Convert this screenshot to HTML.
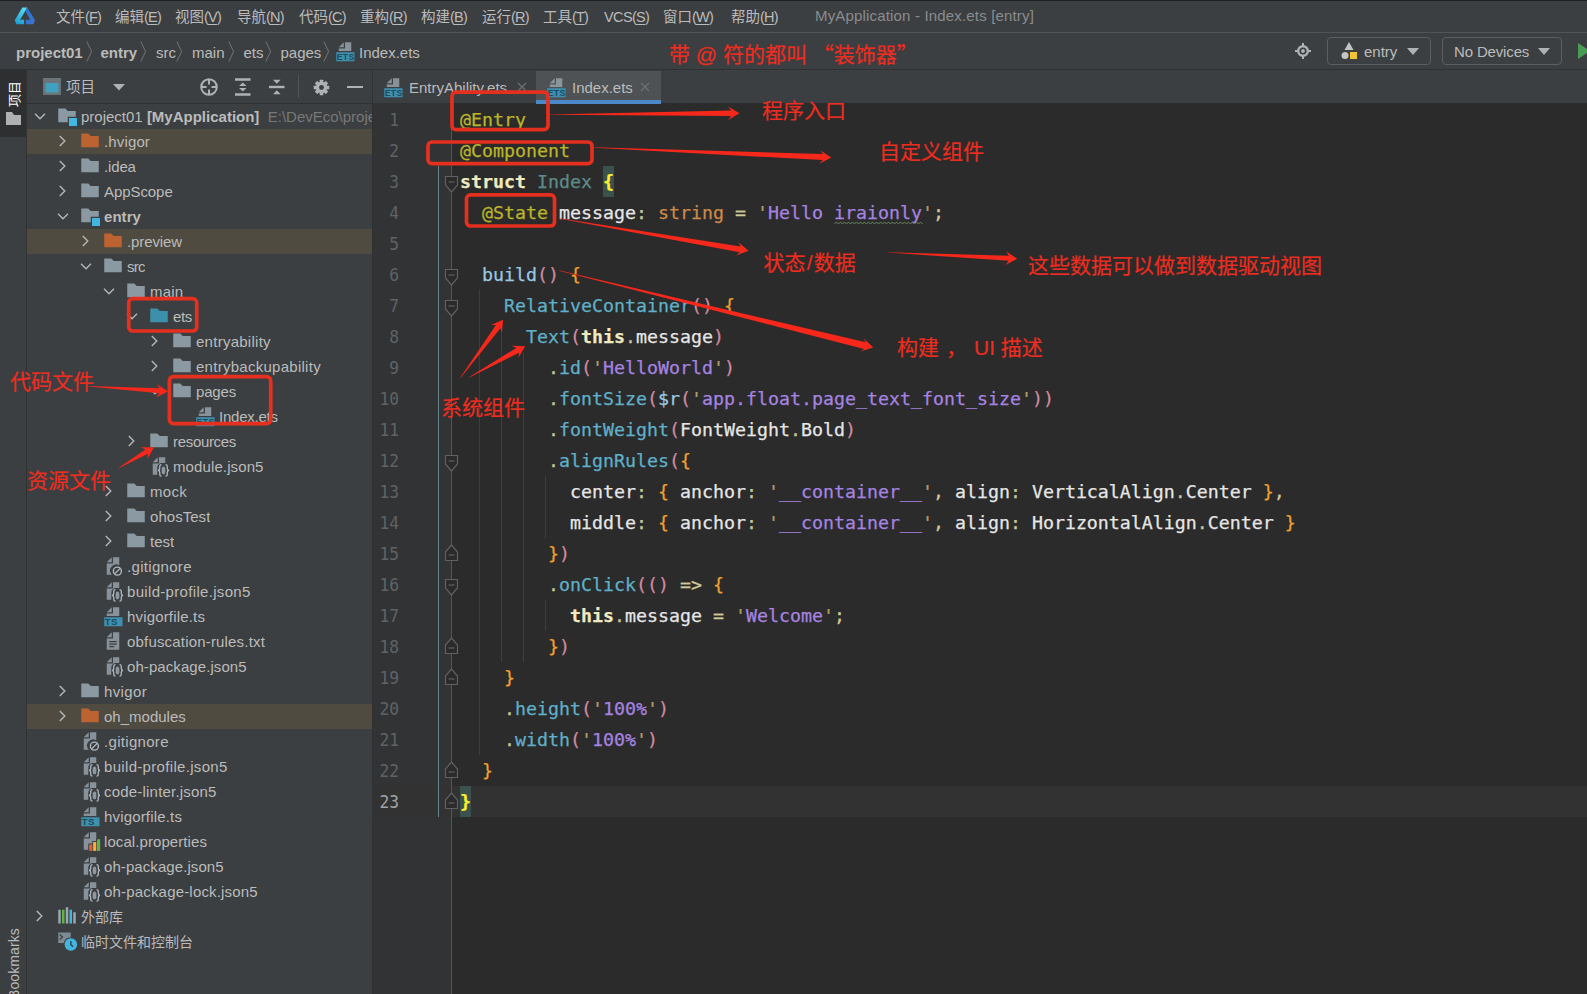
<!DOCTYPE html><html lang="zh"><head><meta charset="utf-8"><title>MyApplication - Index.ets [entry]</title><style>
*{box-sizing:border-box;margin:0;padding:0}
html,body{width:1587px;height:994px;overflow:hidden;background:#3c3f41}
body{position:relative;font-family:"Liberation Sans","Noto Sans CJK SC",sans-serif;color:#bbbbbb;font-size:15px}
.abs{position:absolute}
.t{position:absolute;white-space:nowrap;line-height:1}
#menubar{left:0;top:0;width:1587px;height:32px;background:#3c3f41}
#navbar{left:0;top:32px;width:1587px;height:38px;background:#3c3f41;border-top:1px solid #515355;border-bottom:1px solid #2f3133}
#strip{left:0;top:70px;width:27px;height:924px;background:#3c3f41;border-right:1px solid #323232}
#stripsel{left:0;top:70px;width:26px;height:67px;background:#2d2f30}
#proj{left:27px;top:70px;width:346px;height:924px;background:#3c3f41;border-right:1px solid #2f3133}
#projhead{left:27px;top:70px;width:345px;height:34px;background:#3c3f41;border-bottom:1px solid #2f3133}
#tabs{left:373px;top:70px;width:1214px;height:33px;background:#3c3f41}
#editor{left:373px;top:103px;width:1214px;height:891px;background:#2b2b2b}
#gutter{left:373px;top:103px;width:78px;height:891px;background:#313335}
.menu{font-size:14.5px;color:#bbbbbb;top:9.5px}
.menu u{text-decoration:underline;text-underline-offset:2px}
.bc{font-size:15px;color:#bbbbbb;top:45px}
.b{font-weight:bold}
.row{position:absolute;left:27px;width:345px;height:25px}
.hl{background:#4f4b41}
.tl{position:absolute;white-space:nowrap;font-size:15px;overflow:hidden;color:#bbbbbb;line-height:25px;height:25px}
.code{position:absolute;white-space:pre;-webkit-text-stroke:.25px currentColor;font-family:"DejaVu Sans Mono","Liberation Mono",monospace;font-size:18.27px;line-height:31px;height:31px;left:460px;color:#e0e0e0;letter-spacing:0}
.ln{position:absolute;font-family:"DejaVu Sans Mono","Liberation Mono",monospace;font-size:18.27px;line-height:31px;height:31px;color:#606366;text-align:right;width:30px;left:369px;transform:scaleX(.89);transform-origin:100% 50%}
.red{color:#ee2c1f;-webkit-text-stroke:.2px #ee2c1f;font-family:"Liberation Sans","Noto Sans CJK SC",sans-serif}
.an{color:#bbb529}.kw{color:#f0e9c0;font-weight:bold}.ty{color:#5d8b8b}.st{color:#a683e0}.q{color:#b59a6a}
.or{color:#cc8a4a}.eq{color:#d2ca96}.fn{color:#98c8e2}.pk{color:#d08aa0}.br{color:#f0a030}.cm{color:#5fb0c8}.mt{color:#5fb0c8}
.wh{color:#e6e6e6}.dt{color:#c8c8a0}
</style></head><body>
<div class="abs" id="menubar"></div><div class="abs" id="navbar"></div>
<div class="abs" id="strip"></div><div class="abs" id="stripsel"></div>
<div class="abs" id="proj"></div><div class="abs" id="projhead"></div>
<div class="abs" id="tabs"></div><div class="abs" id="editor"></div><div class="abs" id="gutter"></div>
<svg class="abs" style="left:0;top:0" width="50" height="32" viewBox="0 0 50 32"><defs><linearGradient id="lg1" x1="0.600" y1="0" x2="0.300" y2="1"><stop offset="0" stop-color="#55dcf0"/><stop offset="1" stop-color="#1e9ed2"/></linearGradient><linearGradient id="lg2" x1="0.200" y1="0" x2="0.800" y2="1"><stop offset="0" stop-color="#2a76cc"/><stop offset="1" stop-color="#3f72d4"/></linearGradient></defs><path d="M22.300 7.600 H27.200 L20.200 19.700 H24.100 V24.300 H17.200 Q16.600 24.300 16.300 23.700 L15.100 21.200 Q14.700 20.400 15.200 19.600Z" fill="url(#lg1)"/><path d="M27.200 7.600 L34.600 19.600 Q35.100 20.400 34.700 21.200 L33.500 23.700 Q33.200 24.300 32.600 24.300 H25.900 V19.700 H30.300 L25.300 11.300Z" fill="url(#lg2)"/></svg>
<div class="abs" style="left:0;top:0;width:1587px;height:1px;background:#1e1f20"></div>
<div class="t menu" style="left:56px">文件<span style="letter-spacing:-.8px">(<u>F</u>)</span></div>
<div class="t menu" style="left:115px">编辑<span style="letter-spacing:-.8px">(<u>E</u>)</span></div>
<div class="t menu" style="left:175px">视图<span style="letter-spacing:-.8px">(<u>V</u>)</span></div>
<div class="t menu" style="left:237px">导航<span style="letter-spacing:-.8px">(<u>N</u>)</span></div>
<div class="t menu" style="left:299px">代码<span style="letter-spacing:-.8px">(<u>C</u>)</span></div>
<div class="t menu" style="left:360px">重构<span style="letter-spacing:-.8px">(<u>R</u>)</span></div>
<div class="t menu" style="left:421px">构建<span style="letter-spacing:-.8px">(<u>B</u>)</span></div>
<div class="t menu" style="left:482px">运行<span style="letter-spacing:-.8px">(<u>R</u>)</span></div>
<div class="t menu" style="left:543px">工具<span style="letter-spacing:-.8px">(<u>T</u>)</span></div>
<div class="t menu" style="left:604px"><span style="letter-spacing:-.6px">VCS</span><span style="letter-spacing:-.8px">(<u>S</u>)</span></div>
<div class="t menu" style="left:663px">窗口<span style="letter-spacing:-.8px">(<u>W</u>)</span></div>
<div class="t menu" style="left:731px">帮助<span style="letter-spacing:-.8px">(<u>H</u>)</span></div>
<div class="t" style="left:815px;top:7.5px;font-size:15px;letter-spacing:.17px;color:#8a8c8e">MyApplication - Index.ets [entry]</div>
<div class="t bc b" style="left:16px">project01</div>
<div class="t bc b" style="left:100.5px">entry</div>
<div class="t bc" style="left:156px">src</div>
<div class="t bc" style="left:192px">main</div>
<div class="t bc" style="left:243.5px">ets</div>
<div class="t bc" style="left:280.5px">pages</div>
<svg class="abs" style="left:85.5px;top:41px" width="7" height="21" viewBox="0 0 7 21"><path d="M.8 .5 L5.6 10.5 L.8 20.5" fill="none" stroke="#686b6d" stroke-width="1.1"/></svg>
<svg class="abs" style="left:140px;top:41px" width="7" height="21" viewBox="0 0 7 21"><path d="M.8 .5 L5.6 10.5 L.8 20.5" fill="none" stroke="#686b6d" stroke-width="1.1"/></svg>
<svg class="abs" style="left:175.5px;top:41px" width="7" height="21" viewBox="0 0 7 21"><path d="M.8 .5 L5.6 10.5 L.8 20.5" fill="none" stroke="#686b6d" stroke-width="1.1"/></svg>
<svg class="abs" style="left:227.5px;top:41px" width="7" height="21" viewBox="0 0 7 21"><path d="M.8 .5 L5.6 10.5 L.8 20.5" fill="none" stroke="#686b6d" stroke-width="1.1"/></svg>
<svg class="abs" style="left:264.5px;top:41px" width="7" height="21" viewBox="0 0 7 21"><path d="M.8 .5 L5.6 10.5 L.8 20.5" fill="none" stroke="#686b6d" stroke-width="1.1"/></svg>
<svg class="abs" style="left:323px;top:41px" width="7" height="21" viewBox="0 0 7 21"><path d="M.8 .5 L5.6 10.5 L.8 20.5" fill="none" stroke="#686b6d" stroke-width="1.1"/></svg>
<div class="t bc" style="left:359px">Index.ets</div>
<svg class="abs" style="left:335px;top:41px;overflow:visible" width="20" height="20" viewBox="0 0 16 16"><polygon fill="#9aa7b0" fill-opacity=".8" points="7 1 3 5 7 5"/><polygon fill="#9aa7b0" fill-opacity=".8" points="8 1 8 6 3 6 3 8 13 8 13 1"/><rect x="1" y="9" width="14.6" height="7.2" fill="#3f8fae"/><text x="8.5" y="15.3" font-size="6.9" font-family="Liberation Sans,sans-serif" font-weight="bold" text-anchor="middle" fill="#1b4c61" letter-spacing=".3">ETS</text></svg>
<div class="t red" style="left:669px;top:42.5px;font-size:21px">带 @ 符的都叫 <span style="font-family:'Noto Sans CJK SC',sans-serif">“装饰器”</span></div>
<svg class="abs" style="left:1295px;top:43px" width="16" height="16" viewBox="0 0 16 16"><circle cx="8" cy="8" r="4.800" fill="none" stroke="#afb1b3" stroke-width="2.400"/><circle cx="8" cy="8" r="1.900" fill="#afb1b3"/><path d="M8 0v3M8 13v3M0 8h3M13 8h3" stroke="#afb1b3" stroke-width="2"/></svg>
<div class="abs" style="left:1327px;top:37px;width:104px;height:28px;border:1px solid #5c5f61;border-radius:4px"></div>
<svg class="abs" style="left:1340px;top:42px" width="18" height="18" viewBox="0 0 18 18"><path d="M9 0 L13.5 8 L4.5 8Z" fill="#c4c4c4"/><circle cx="5" cy="13.5" r="3.5" fill="#c4c4c4"/><rect x="10" y="10" width="7" height="7" fill="#f4c430"/></svg>
<div class="t" style="left:1364px;top:44px;font-size:15px;color:#bbbbbb">entry</div>
<svg class="abs" style="left:1407px;top:48px" width="12" height="7" viewBox="0 0 12 7"><path d="M0 0 L12 0 L6 7Z" fill="#afb1b3"/></svg>
<div class="abs" style="left:1442px;top:37px;width:120px;height:28px;border:1px solid #5c5f61;border-radius:4px"></div>
<div class="t" style="left:1454px;top:44px;font-size:15px;letter-spacing:-.15px;color:#bbbbbb">No Devices</div>
<svg class="abs" style="left:1538px;top:48px" width="12" height="7" viewBox="0 0 12 7"><path d="M0 0 L12 0 L6 7Z" fill="#afb1b3"/></svg>
<svg class="abs" style="left:1578px;top:43px" width="9" height="16" viewBox="0 0 9 16"><path d="M0 0 L12 8 L0 16Z" fill="#499c54"/></svg>
<div class="t" style="left:7.5px;top:106.500px;font-size:13px;color:#ffffff;transform-origin:0 0;transform:rotate(-90deg)">项目</div>
<svg class="abs" style="left:6px;top:112px" width="15" height="13" viewBox="0 0 15 13"><path d="M0 0 H6 L8 3 H15 V13 H0Z" fill="#afb1b3"/></svg>
<div class="t" style="left:6.5px;top:999px;font-size:14px;letter-spacing:.1px;color:#bbbbbb;transform-origin:0 0;transform:rotate(-90deg)">Bookmarks</div>
<svg class="abs" style="left:43px;top:78px" width="18" height="17" viewBox="0 0 18 17"><rect x="0" y="0" width="18" height="17" fill="#7f8b91" opacity=".7"/><rect x="2.5" y="5" width="13" height="9.5" fill="#40a0c0"/></svg>
<div class="t" style="left:66px;top:80px;font-size:14.5px;color:#bbbbbb">项目</div>
<svg class="abs" style="left:113px;top:84px" width="12" height="7" viewBox="0 0 12 7"><path d="M0 0 L12 0 L6 6.5Z" fill="#afb1b3"/></svg>
<svg class="abs" style="left:200px;top:78px" width="18" height="18" viewBox="0 0 18 18"><circle cx="9" cy="9" r="7.8" fill="none" stroke="#afb1b3" stroke-width="2"/><path d="M9 1v5.5M9 11.5v5.5M1 9h5.5M11.500 9h5.5" stroke="#afb1b3" stroke-width="2"/></svg>
<svg class="abs" style="left:235px;top:78px" width="16" height="18" viewBox="0 0 16 18"><path d="M0 1.5h15.500M0 16.500h15.500" stroke="#afb1b3" stroke-width="2.6"/><path d="M7.800 4.500 L11.500 8 H4Z M7.800 13.500 L11.500 10 H4Z" fill="#afb1b3"/></svg>
<svg class="abs" style="left:269px;top:78px" width="16" height="18" viewBox="0 0 16 18"><path d="M0 9h15.500" stroke="#afb1b3" stroke-width="2.4"/><path d="M7.800 5.800 L11.600 1.800 H4Z M7.800 12.200 L11.600 16.200 H4Z" fill="#afb1b3"/></svg>
<div class="abs" style="left:298px;top:75px;width:1px;height:23px;background:#515355"></div>
<svg class="abs" style="left:312.5px;top:78.5px" width="17" height="17" viewBox="0 0 18 18"><g fill="#afb1b3"><circle cx="9" cy="9" r="6"/><rect x="7.1" y="0.800" width="3.800" height="5" rx=".6" transform="rotate(0 9 9)"/><rect x="7.1" y="0.800" width="3.800" height="5" rx=".6" transform="rotate(45 9 9)"/><rect x="7.1" y="0.800" width="3.800" height="5" rx=".6" transform="rotate(90 9 9)"/><rect x="7.1" y="0.800" width="3.800" height="5" rx=".6" transform="rotate(135 9 9)"/><rect x="7.1" y="0.800" width="3.800" height="5" rx=".6" transform="rotate(180 9 9)"/><rect x="7.1" y="0.800" width="3.800" height="5" rx=".6" transform="rotate(225 9 9)"/><rect x="7.1" y="0.800" width="3.800" height="5" rx=".6" transform="rotate(270 9 9)"/><rect x="7.1" y="0.800" width="3.800" height="5" rx=".6" transform="rotate(315 9 9)"/></g><circle cx="9" cy="9" r="2.600" fill="#3c3f41"/></svg>
<div class="abs" style="left:347px;top:85.500px;width:15.500px;height:2.600px;background:#afb1b3"></div>
<svg class="abs" style="left:33px;top:112px" width="14" height="9" viewBox="0 0 14 9"><path d="M2 1.800 L7 6.800 L12 1.800" fill="none" stroke="#b4b6b8" stroke-width="1.400"/></svg>
<svg class="abs" style="left:57px;top:106px;overflow:visible" width="20" height="20" viewBox="0 0 16 16"><path d="M1 2 H6.6 L8.6 4 H15 V13 H1Z" fill="#8b99a2"/><rect x="8.6" y="8.6" width="8" height="8" fill="#3c3f41"/><rect x="9.6" y="9.6" width="6.4" height="6.4" fill="#40b6e0"/></svg>
<div class="tl" style="left:81px;top:104px;max-width:291px;letter-spacing:0px">project01 <b>[MyApplication]</b><span style="color:#787878">&nbsp; E:\DevEco\proje</span></div>
<div class="row hl" style="top:129px"></div>
<svg class="abs" style="left:57.5px;top:134px" width="9" height="14" viewBox="0 0 9 14"><path d="M1.800 2 L6.800 7 L1.800 12" fill="none" stroke="#b4b6b8" stroke-width="1.400"/></svg>
<svg class="abs" style="left:80px;top:131px;overflow:visible" width="20" height="20" viewBox="0 0 16 16"><path d="M1 2 H6.6 L8.6 4 H15 V13 H1Z" fill="#bd6331"/></svg>
<div class="tl" style="left:104px;top:129px;max-width:268px;letter-spacing:0.14px">.hvigor</div>
<svg class="abs" style="left:57.5px;top:159px" width="9" height="14" viewBox="0 0 9 14"><path d="M1.800 2 L6.800 7 L1.800 12" fill="none" stroke="#b4b6b8" stroke-width="1.400"/></svg>
<svg class="abs" style="left:80px;top:156px;overflow:visible" width="20" height="20" viewBox="0 0 16 16"><path d="M1 2 H6.6 L8.6 4 H15 V13 H1Z" fill="#8b99a2"/></svg>
<div class="tl" style="left:104px;top:154px;max-width:268px;letter-spacing:-0.15px">.idea</div>
<svg class="abs" style="left:57.5px;top:184px" width="9" height="14" viewBox="0 0 9 14"><path d="M1.800 2 L6.800 7 L1.800 12" fill="none" stroke="#b4b6b8" stroke-width="1.400"/></svg>
<svg class="abs" style="left:80px;top:181px;overflow:visible" width="20" height="20" viewBox="0 0 16 16"><path d="M1 2 H6.6 L8.6 4 H15 V13 H1Z" fill="#8b99a2"/></svg>
<div class="tl" style="left:104px;top:179px;max-width:268px;letter-spacing:-0.07px">AppScope</div>
<svg class="abs" style="left:56px;top:212px" width="14" height="9" viewBox="0 0 14 9"><path d="M2 1.800 L7 6.800 L12 1.800" fill="none" stroke="#b4b6b8" stroke-width="1.400"/></svg>
<svg class="abs" style="left:80px;top:206px;overflow:visible" width="20" height="20" viewBox="0 0 16 16"><path d="M1 2 H6.6 L8.6 4 H15 V13 H1Z" fill="#8b99a2"/><rect x="8.6" y="8.6" width="8" height="8" fill="#3c3f41"/><rect x="9.6" y="9.6" width="6.4" height="6.4" fill="#40b6e0"/></svg>
<div class="tl" style="left:104px;top:204px;max-width:268px;letter-spacing:0.06px"><b>entry</b></div>
<div class="row hl" style="top:229px"></div>
<svg class="abs" style="left:80.5px;top:234px" width="9" height="14" viewBox="0 0 9 14"><path d="M1.800 2 L6.800 7 L1.800 12" fill="none" stroke="#b4b6b8" stroke-width="1.400"/></svg>
<svg class="abs" style="left:103px;top:231px;overflow:visible" width="20" height="20" viewBox="0 0 16 16"><path d="M1 2 H6.6 L8.6 4 H15 V13 H1Z" fill="#bd6331"/></svg>
<div class="tl" style="left:127px;top:229px;max-width:245px;letter-spacing:-0.11px">.preview</div>
<svg class="abs" style="left:79px;top:262px" width="14" height="9" viewBox="0 0 14 9"><path d="M2 1.800 L7 6.800 L12 1.800" fill="none" stroke="#b4b6b8" stroke-width="1.400"/></svg>
<svg class="abs" style="left:103px;top:256px;overflow:visible" width="20" height="20" viewBox="0 0 16 16"><path d="M1 2 H6.6 L8.6 4 H15 V13 H1Z" fill="#8b99a2"/></svg>
<div class="tl" style="left:127px;top:254px;max-width:245px;letter-spacing:-0.7px">src</div>
<svg class="abs" style="left:102px;top:287px" width="14" height="9" viewBox="0 0 14 9"><path d="M2 1.800 L7 6.800 L12 1.800" fill="none" stroke="#b4b6b8" stroke-width="1.400"/></svg>
<svg class="abs" style="left:126px;top:281px;overflow:visible" width="20" height="20" viewBox="0 0 16 16"><path d="M1 2 H6.6 L8.6 4 H15 V13 H1Z" fill="#8b99a2"/></svg>
<div class="tl" style="left:150px;top:279px;max-width:222px;letter-spacing:0.17px">main</div>
<svg class="abs" style="left:125px;top:312px" width="14" height="9" viewBox="0 0 14 9"><path d="M2 1.800 L7 6.800 L12 1.800" fill="none" stroke="#b4b6b8" stroke-width="1.400"/></svg>
<svg class="abs" style="left:149px;top:306px;overflow:visible" width="20" height="20" viewBox="0 0 16 16"><path d="M1 2 H6.6 L8.6 4 H15 V13 H1Z" fill="#3d90ab"/></svg>
<div class="tl" style="left:173px;top:304px;max-width:199px;letter-spacing:-0.34px">ets</div>
<svg class="abs" style="left:149.5px;top:334px" width="9" height="14" viewBox="0 0 9 14"><path d="M1.800 2 L6.800 7 L1.800 12" fill="none" stroke="#b4b6b8" stroke-width="1.400"/></svg>
<svg class="abs" style="left:172px;top:331px;overflow:visible" width="20" height="20" viewBox="0 0 16 16"><path d="M1 2 H6.6 L8.6 4 H15 V13 H1Z" fill="#8b99a2"/></svg>
<div class="tl" style="left:196px;top:329px;max-width:176px;letter-spacing:0.26px">entryability</div>
<svg class="abs" style="left:149.5px;top:359px" width="9" height="14" viewBox="0 0 9 14"><path d="M1.800 2 L6.800 7 L1.800 12" fill="none" stroke="#b4b6b8" stroke-width="1.400"/></svg>
<svg class="abs" style="left:172px;top:356px;overflow:visible" width="20" height="20" viewBox="0 0 16 16"><path d="M1 2 H6.6 L8.6 4 H15 V13 H1Z" fill="#8b99a2"/></svg>
<div class="tl" style="left:196px;top:354px;max-width:176px;letter-spacing:0.27px">entrybackupability</div>
<svg class="abs" style="left:148px;top:387px" width="14" height="9" viewBox="0 0 14 9"><path d="M2 1.800 L7 6.800 L12 1.800" fill="none" stroke="#b4b6b8" stroke-width="1.400"/></svg>
<svg class="abs" style="left:172px;top:381px;overflow:visible" width="20" height="20" viewBox="0 0 16 16"><path d="M1 2 H6.6 L8.6 4 H15 V13 H1Z" fill="#8b99a2"/></svg>
<div class="tl" style="left:196px;top:379px;max-width:176px;letter-spacing:-0.17px">pages</div>
<svg class="abs" style="left:195px;top:406px;overflow:visible" width="20" height="20" viewBox="0 0 16 16"><polygon fill="#9aa7b0" fill-opacity=".8" points="7 1 3 5 7 5"/><polygon fill="#9aa7b0" fill-opacity=".8" points="8 1 8 6 3 6 3 8 13 8 13 1"/><rect x="1" y="9" width="14.6" height="7.2" fill="#3f8fae"/><text x="8.5" y="15.3" font-size="6.9" font-family="Liberation Sans,sans-serif" font-weight="bold" text-anchor="middle" fill="#1b4c61" letter-spacing=".3">ETS</text></svg>
<div class="tl" style="left:219px;top:404px;max-width:153px;letter-spacing:-0.24px">Index.ets</div>
<svg class="abs" style="left:126.5px;top:434px" width="9" height="14" viewBox="0 0 9 14"><path d="M1.800 2 L6.800 7 L1.800 12" fill="none" stroke="#b4b6b8" stroke-width="1.400"/></svg>
<svg class="abs" style="left:149px;top:431px;overflow:visible" width="20" height="20" viewBox="0 0 16 16"><path d="M1 2 H6.6 L8.6 4 H15 V13 H1Z" fill="#8b99a2"/></svg>
<div class="tl" style="left:173px;top:429px;max-width:199px;letter-spacing:-0.32px">resources</div>
<svg class="abs" style="left:149px;top:456px;overflow:visible" width="20" height="20" viewBox="0 0 16 16"><polygon fill="#9aa7b0" fill-opacity=".8" points="7 1 3 5 7 5"/><path fill="#9aa7b0" fill-opacity=".8" d="M8 1 H13 V5.6 H9.6 Q6.6 6.6 6.6 9.5 V15 H3 V6 H8Z"/><ellipse cx="11.6" cy="11.5" rx="1.55" ry="3.1" fill="#9aa7b0" fill-opacity=".85"/><path d="M10 6.9 Q8.6 6.9 8.6 8.2 V9.8 Q8.6 11.4 7.2 11.5 Q8.6 11.6 8.6 13.2 V14.8 Q8.6 16.1 10 16.1 M13.2 6.9 Q14.6 6.9 14.6 8.2 V9.8 Q14.6 11.4 16 11.5 Q14.6 11.6 14.6 13.2 V14.8 Q14.6 16.1 13.2 16.1" fill="none" stroke="#aeb9c0" stroke-width="1.05"/></svg>
<div class="tl" style="left:173px;top:454px;max-width:199px;letter-spacing:0.11px">module.json5</div>
<svg class="abs" style="left:103.5px;top:484px" width="9" height="14" viewBox="0 0 9 14"><path d="M1.800 2 L6.800 7 L1.800 12" fill="none" stroke="#b4b6b8" stroke-width="1.400"/></svg>
<svg class="abs" style="left:126px;top:481px;overflow:visible" width="20" height="20" viewBox="0 0 16 16"><path d="M1 2 H6.6 L8.6 4 H15 V13 H1Z" fill="#8b99a2"/></svg>
<div class="tl" style="left:150px;top:479px;max-width:222px;letter-spacing:0.34px">mock</div>
<svg class="abs" style="left:103.5px;top:509px" width="9" height="14" viewBox="0 0 9 14"><path d="M1.800 2 L6.800 7 L1.800 12" fill="none" stroke="#b4b6b8" stroke-width="1.400"/></svg>
<svg class="abs" style="left:126px;top:506px;overflow:visible" width="20" height="20" viewBox="0 0 16 16"><path d="M1 2 H6.6 L8.6 4 H15 V13 H1Z" fill="#8b99a2"/></svg>
<div class="tl" style="left:150px;top:504px;max-width:222px;letter-spacing:0.04px">ohosTest</div>
<svg class="abs" style="left:103.5px;top:534px" width="9" height="14" viewBox="0 0 9 14"><path d="M1.800 2 L6.800 7 L1.800 12" fill="none" stroke="#b4b6b8" stroke-width="1.400"/></svg>
<svg class="abs" style="left:126px;top:531px;overflow:visible" width="20" height="20" viewBox="0 0 16 16"><path d="M1 2 H6.6 L8.6 4 H15 V13 H1Z" fill="#8b99a2"/></svg>
<div class="tl" style="left:150px;top:529px;max-width:222px;letter-spacing:0.0px">test</div>
<svg class="abs" style="left:103px;top:556px;overflow:visible" width="20" height="20" viewBox="0 0 16 16"><polygon fill="#9aa7b0" fill-opacity=".8" points="7 1 3 5 7 5"/><path fill="#9aa7b0" fill-opacity=".8" d="M8 1 H13 V7.3 A4.9 4.9 0 0 0 7.1 15 H3 V6 H8Z"/><circle cx="11.5" cy="12.1" r="3.2" fill="none" stroke="#aeb9c0" stroke-width="1.1"/><path d="M9.3 14.3 L13.7 9.9" stroke="#aeb9c0" stroke-width="1.1"/></svg>
<div class="tl" style="left:127px;top:554px;max-width:245px;letter-spacing:0.31px">.gitignore</div>
<svg class="abs" style="left:103px;top:581px;overflow:visible" width="20" height="20" viewBox="0 0 16 16"><polygon fill="#9aa7b0" fill-opacity=".8" points="7 1 3 5 7 5"/><path fill="#9aa7b0" fill-opacity=".8" d="M8 1 H13 V5.6 H9.6 Q6.6 6.6 6.6 9.5 V15 H3 V6 H8Z"/><ellipse cx="11.6" cy="11.5" rx="1.55" ry="3.1" fill="#9aa7b0" fill-opacity=".85"/><path d="M10 6.9 Q8.6 6.9 8.6 8.2 V9.8 Q8.6 11.4 7.2 11.5 Q8.6 11.6 8.6 13.2 V14.8 Q8.6 16.1 10 16.1 M13.2 6.9 Q14.6 6.9 14.6 8.2 V9.8 Q14.6 11.4 16 11.5 Q14.6 11.6 14.6 13.2 V14.8 Q14.6 16.1 13.2 16.1" fill="none" stroke="#aeb9c0" stroke-width="1.05"/></svg>
<div class="tl" style="left:127px;top:579px;max-width:245px;letter-spacing:0.32px">build-profile.json5</div>
<svg class="abs" style="left:103px;top:606px;overflow:visible" width="20" height="20" viewBox="0 0 16 16"><polygon fill="#9aa7b0" fill-opacity=".8" points="7 1 3 5 7 5"/><polygon fill="#9aa7b0" fill-opacity=".8" points="8 1 8 6 3 6 3 8 13 8 13 1"/><rect x="1" y="9" width="14.6" height="7.2" fill="#3f8fae"/><text x="6.6" y="15.3" font-size="7.6" font-family="Liberation Sans,sans-serif" font-weight="bold" text-anchor="middle" fill="#1b4c61" letter-spacing=".3">TS</text></svg>
<div class="tl" style="left:127px;top:604px;max-width:245px;letter-spacing:0.17px">hvigorfile.ts</div>
<svg class="abs" style="left:103px;top:631px;overflow:visible" width="20" height="20" viewBox="0 0 16 16"><polygon fill="#9aa7b0" fill-opacity=".8" points="7 1 3 5 7 5"/><path fill="#9aa7b0" fill-opacity=".8" d="M8 1 H13 V15 H3 V6 H8Z"/><path d="M5 8.5h6M5 10.5h6M5 12.5h4" stroke="#3c3f41" stroke-width="1"/></svg>
<div class="tl" style="left:127px;top:629px;max-width:245px;letter-spacing:0.18px">obfuscation-rules.txt</div>
<svg class="abs" style="left:103px;top:656px;overflow:visible" width="20" height="20" viewBox="0 0 16 16"><polygon fill="#9aa7b0" fill-opacity=".8" points="7 1 3 5 7 5"/><path fill="#9aa7b0" fill-opacity=".8" d="M8 1 H13 V5.6 H9.6 Q6.6 6.6 6.6 9.5 V15 H3 V6 H8Z"/><ellipse cx="11.6" cy="11.5" rx="1.55" ry="3.1" fill="#9aa7b0" fill-opacity=".85"/><path d="M10 6.9 Q8.6 6.9 8.6 8.2 V9.8 Q8.6 11.4 7.2 11.5 Q8.6 11.6 8.6 13.2 V14.8 Q8.6 16.1 10 16.1 M13.2 6.9 Q14.6 6.9 14.6 8.2 V9.8 Q14.6 11.4 16 11.5 Q14.6 11.6 14.6 13.2 V14.8 Q14.6 16.1 13.2 16.1" fill="none" stroke="#aeb9c0" stroke-width="1.05"/></svg>
<div class="tl" style="left:127px;top:654px;max-width:245px;letter-spacing:0.08px">oh-package.json5</div>
<svg class="abs" style="left:57.5px;top:684px" width="9" height="14" viewBox="0 0 9 14"><path d="M1.800 2 L6.800 7 L1.800 12" fill="none" stroke="#b4b6b8" stroke-width="1.400"/></svg>
<svg class="abs" style="left:80px;top:681px;overflow:visible" width="20" height="20" viewBox="0 0 16 16"><path d="M1 2 H6.6 L8.6 4 H15 V13 H1Z" fill="#8b99a2"/></svg>
<div class="tl" style="left:104px;top:679px;max-width:268px;letter-spacing:0.36px">hvigor</div>
<div class="row hl" style="top:704px"></div>
<svg class="abs" style="left:57.5px;top:709px" width="9" height="14" viewBox="0 0 9 14"><path d="M1.800 2 L6.800 7 L1.800 12" fill="none" stroke="#b4b6b8" stroke-width="1.400"/></svg>
<svg class="abs" style="left:80px;top:706px;overflow:visible" width="20" height="20" viewBox="0 0 16 16"><path d="M1 2 H6.6 L8.6 4 H15 V13 H1Z" fill="#bd6331"/></svg>
<div class="tl" style="left:104px;top:704px;max-width:268px;letter-spacing:0.01px">oh_modules</div>
<svg class="abs" style="left:80px;top:731px;overflow:visible" width="20" height="20" viewBox="0 0 16 16"><polygon fill="#9aa7b0" fill-opacity=".8" points="7 1 3 5 7 5"/><path fill="#9aa7b0" fill-opacity=".8" d="M8 1 H13 V7.3 A4.9 4.9 0 0 0 7.1 15 H3 V6 H8Z"/><circle cx="11.5" cy="12.1" r="3.2" fill="none" stroke="#aeb9c0" stroke-width="1.1"/><path d="M9.3 14.3 L13.7 9.9" stroke="#aeb9c0" stroke-width="1.1"/></svg>
<div class="tl" style="left:104px;top:729px;max-width:268px;letter-spacing:0.31px">.gitignore</div>
<svg class="abs" style="left:80px;top:756px;overflow:visible" width="20" height="20" viewBox="0 0 16 16"><polygon fill="#9aa7b0" fill-opacity=".8" points="7 1 3 5 7 5"/><path fill="#9aa7b0" fill-opacity=".8" d="M8 1 H13 V5.6 H9.6 Q6.6 6.6 6.6 9.5 V15 H3 V6 H8Z"/><ellipse cx="11.6" cy="11.5" rx="1.55" ry="3.1" fill="#9aa7b0" fill-opacity=".85"/><path d="M10 6.9 Q8.6 6.9 8.6 8.2 V9.8 Q8.6 11.4 7.2 11.5 Q8.6 11.6 8.6 13.2 V14.8 Q8.6 16.1 10 16.1 M13.2 6.9 Q14.6 6.9 14.6 8.2 V9.8 Q14.6 11.4 16 11.5 Q14.6 11.6 14.6 13.2 V14.8 Q14.6 16.1 13.2 16.1" fill="none" stroke="#aeb9c0" stroke-width="1.05"/></svg>
<div class="tl" style="left:104px;top:754px;max-width:268px;letter-spacing:0.32px">build-profile.json5</div>
<svg class="abs" style="left:80px;top:781px;overflow:visible" width="20" height="20" viewBox="0 0 16 16"><polygon fill="#9aa7b0" fill-opacity=".8" points="7 1 3 5 7 5"/><path fill="#9aa7b0" fill-opacity=".8" d="M8 1 H13 V5.6 H9.6 Q6.6 6.6 6.6 9.5 V15 H3 V6 H8Z"/><ellipse cx="11.6" cy="11.5" rx="1.55" ry="3.1" fill="#9aa7b0" fill-opacity=".85"/><path d="M10 6.9 Q8.6 6.9 8.6 8.2 V9.8 Q8.6 11.4 7.2 11.5 Q8.6 11.6 8.6 13.2 V14.8 Q8.6 16.1 10 16.1 M13.2 6.9 Q14.6 6.9 14.6 8.2 V9.8 Q14.6 11.4 16 11.5 Q14.6 11.6 14.6 13.2 V14.8 Q14.6 16.1 13.2 16.1" fill="none" stroke="#aeb9c0" stroke-width="1.05"/></svg>
<div class="tl" style="left:104px;top:779px;max-width:268px;letter-spacing:0.2px">code-linter.json5</div>
<svg class="abs" style="left:80px;top:806px;overflow:visible" width="20" height="20" viewBox="0 0 16 16"><polygon fill="#9aa7b0" fill-opacity=".8" points="7 1 3 5 7 5"/><polygon fill="#9aa7b0" fill-opacity=".8" points="8 1 8 6 3 6 3 8 13 8 13 1"/><rect x="1" y="9" width="14.6" height="7.2" fill="#3f8fae"/><text x="6.6" y="15.3" font-size="7.6" font-family="Liberation Sans,sans-serif" font-weight="bold" text-anchor="middle" fill="#1b4c61" letter-spacing=".3">TS</text></svg>
<div class="tl" style="left:104px;top:804px;max-width:268px;letter-spacing:0.17px">hvigorfile.ts</div>
<svg class="abs" style="left:80px;top:831px;overflow:visible" width="20" height="20" viewBox="0 0 16 16"><polygon fill="#9aa7b0" fill-opacity=".8" points="7 1 3 5 7 5"/><path fill="#9aa7b0" fill-opacity=".8" d="M8 1 H13 V5.8 H12.8 V8 H9.8 V10 H6.6 V15 H3 V6 H8Z"/><rect x="7.4" y="10.8" width="2.5" height="5.1" fill="#e0613a"/><rect x="10.5" y="8.8" width="2.5" height="7.1" fill="#f4af3d"/><rect x="13.6" y="6.6" width="2.5" height="9.3" fill="#62b543"/></svg>
<div class="tl" style="left:104px;top:829px;max-width:268px;letter-spacing:0.08px">local.properties</div>
<svg class="abs" style="left:80px;top:856px;overflow:visible" width="20" height="20" viewBox="0 0 16 16"><polygon fill="#9aa7b0" fill-opacity=".8" points="7 1 3 5 7 5"/><path fill="#9aa7b0" fill-opacity=".8" d="M8 1 H13 V5.6 H9.6 Q6.6 6.6 6.6 9.5 V15 H3 V6 H8Z"/><ellipse cx="11.6" cy="11.5" rx="1.55" ry="3.1" fill="#9aa7b0" fill-opacity=".85"/><path d="M10 6.9 Q8.6 6.9 8.6 8.2 V9.8 Q8.6 11.4 7.2 11.5 Q8.6 11.6 8.6 13.2 V14.8 Q8.6 16.1 10 16.1 M13.2 6.9 Q14.6 6.9 14.6 8.2 V9.8 Q14.6 11.4 16 11.5 Q14.6 11.6 14.6 13.2 V14.8 Q14.6 16.1 13.2 16.1" fill="none" stroke="#aeb9c0" stroke-width="1.05"/></svg>
<div class="tl" style="left:104px;top:854px;max-width:268px;letter-spacing:0.08px">oh-package.json5</div>
<svg class="abs" style="left:80px;top:881px;overflow:visible" width="20" height="20" viewBox="0 0 16 16"><polygon fill="#9aa7b0" fill-opacity=".8" points="7 1 3 5 7 5"/><path fill="#9aa7b0" fill-opacity=".8" d="M8 1 H13 V5.6 H9.6 Q6.6 6.6 6.6 9.5 V15 H3 V6 H8Z"/><ellipse cx="11.6" cy="11.5" rx="1.55" ry="3.1" fill="#9aa7b0" fill-opacity=".85"/><path d="M10 6.9 Q8.6 6.9 8.6 8.2 V9.8 Q8.6 11.4 7.2 11.5 Q8.6 11.6 8.6 13.2 V14.8 Q8.6 16.1 10 16.1 M13.2 6.9 Q14.6 6.9 14.6 8.2 V9.8 Q14.6 11.4 16 11.5 Q14.6 11.6 14.6 13.2 V14.8 Q14.6 16.1 13.2 16.1" fill="none" stroke="#aeb9c0" stroke-width="1.05"/></svg>
<div class="tl" style="left:104px;top:879px;max-width:268px;letter-spacing:0.18px">oh-package-lock.json5</div>
<svg class="abs" style="left:34.5px;top:909px" width="9" height="14" viewBox="0 0 9 14"><path d="M1.800 2 L6.800 7 L1.800 12" fill="none" stroke="#b4b6b8" stroke-width="1.400"/></svg>
<svg class="abs" style="left:57px;top:906px;overflow:visible" width="20" height="20" viewBox="0 0 16 16"><rect x="1" y="3" width="2" height="11" fill="#9aa7b0"/><rect x="4" y="3" width="2" height="11" fill="#62b543"/><rect x="7" y="1" width="2" height="13" fill="#9aa7b0"/><rect x="10" y="3" width="2" height="11" fill="#40b6e0"/><rect x="13" y="5" width="2" height="9" fill="#9aa7b0"/></svg>
<div class="tl" style="left:81px;top:904px;max-width:291px;letter-spacing:0px"><span style="font-size:14px">外部库</span></div>
<svg class="abs" style="left:57px;top:931px;overflow:visible" width="20" height="20" viewBox="0 0 16 16"><path d="M1 1.2 H11 V5 A5.8 5.8 0 0 0 5.4 9.6 H1Z" fill="#8b99a2" fill-opacity=".85"/><path d="M2.2 2.8 L4.4 4.8 L2.2 6.8" fill="none" stroke="#3c3f41" stroke-width="1"/><circle cx="11.1" cy="10.8" r="5" fill="#40b6e0"/><path d="M11.1 8 V11 L12.8 12.5" fill="none" stroke="#3c3f41" stroke-width="1.1"/></svg>
<div class="tl" style="left:81px;top:929px;max-width:291px;letter-spacing:0px"><span style="font-size:14px">临时文件和控制台</span></div>
<div class="abs" style="left:536px;top:71px;width:125px;height:32px;background:#4e5254"></div>
<div class="abs" style="left:536px;top:100px;width:125px;height:4px;background:#4a88c7"></div>
<svg class="abs" style="left:383px;top:77px;overflow:visible" width="20" height="20" viewBox="0 0 16 16"><polygon fill="#9aa7b0" fill-opacity=".8" points="7 1 3 5 7 5"/><polygon fill="#9aa7b0" fill-opacity=".8" points="8 1 8 6 3 6 3 8 13 8 13 1"/><rect x="1" y="9" width="14.6" height="7.2" fill="#3f8fae"/><text x="8.5" y="15.3" font-size="6.9" font-family="Liberation Sans,sans-serif" font-weight="bold" text-anchor="middle" fill="#1b4c61" letter-spacing=".3">ETS</text></svg>
<div class="t" style="left:409px;top:80px;font-size:15px;color:#bbbbbb">EntryAbility.ets</div>
<svg class="abs" style="left:546px;top:77px;overflow:visible" width="20" height="20" viewBox="0 0 16 16"><polygon fill="#9aa7b0" fill-opacity=".8" points="7 1 3 5 7 5"/><polygon fill="#9aa7b0" fill-opacity=".8" points="8 1 8 6 3 6 3 8 13 8 13 1"/><rect x="1" y="9" width="14.6" height="7.2" fill="#3f8fae"/><text x="8.5" y="15.3" font-size="6.9" font-family="Liberation Sans,sans-serif" font-weight="bold" text-anchor="middle" fill="#1b4c61" letter-spacing=".3">ETS</text></svg>
<div class="t" style="left:572px;top:80px;font-size:15px;color:#bbbbbb">Index.ets</div>
<svg class="abs" style="left:517px;top:82px" width="10" height="10" viewBox="0 0 10 10"><path d="M1 1 L9 9 M9 1 L1 9" stroke="#6e7173" stroke-width="1.2"/></svg>
<svg class="abs" style="left:640px;top:82px" width="10" height="10" viewBox="0 0 10 10"><path d="M1 1 L9 9 M9 1 L1 9" stroke="#6e7173" stroke-width="1.2"/></svg>
<div class="abs" style="left:373px;top:786px;width:1214px;height:31px;background:#323232"></div>
<div class="abs" style="left:438px;top:166px;width:1px;height:651px;background:#668489"></div>
<div class="abs" style="left:451px;top:104px;width:1px;height:890px;background:#555555"></div>
<div class="ln" style="top:104px;color:#606366">1</div>
<div class="code" style="top:104px"><span class="an">@Entry</span></div>
<div class="ln" style="top:135px;color:#606366">2</div>
<div class="code" style="top:135px"><span class="an">@Component</span></div>
<div class="ln" style="top:166px;color:#606366">3</div>
<div class="code" style="top:166px"><span class="kw">struct</span> <span class="ty">Index</span> <span style="color:#ffef28;background:#3b514d;font-weight:bold;display:inline-block;height:31px;vertical-align:top">{</span></div>
<div class="ln" style="top:197px;color:#606366">4</div>
<div class="code" style="top:197px">  <span class="an">@State</span> <span class="wh">message</span><span class="dt">:</span> <span class="or">string</span> <span class="eq">=</span> <span class="q">&#x27;</span><span class="st">Hello </span><span class="st">iraionly</span><span class="q">&#x27;</span><span class="eq">;</span></div>
<div class="ln" style="top:228px;color:#606366">5</div>
<div class="code" style="top:228px"></div>
<div class="ln" style="top:259px;color:#606366">6</div>
<div class="code" style="top:259px">  <span class="fn">build</span><span class="pk">()</span> <span class="br">{</span></div>
<div class="ln" style="top:290px;color:#606366">7</div>
<div class="code" style="top:290px">    <span class="cm">RelativeContainer</span><span class="pk">()</span> <span class="br">{</span></div>
<div class="ln" style="top:321px;color:#606366">8</div>
<div class="code" style="top:321px">      <span class="cm">Text</span><span class="pk">(</span><span class="kw">this</span><span class="dt">.</span><span class="wh">message</span><span class="pk">)</span></div>
<div class="ln" style="top:352px;color:#606366">9</div>
<div class="code" style="top:352px">        <span class="dt">.</span><span class="mt">id</span><span class="pk">(</span><span class="q">&#x27;</span><span class="st">HelloWorld</span><span class="q">&#x27;</span><span class="pk">)</span></div>
<div class="ln" style="top:383px;color:#606366">10</div>
<div class="code" style="top:383px">        <span class="dt">.</span><span class="mt">fontSize</span><span class="pk">(</span><span class="fn">$r</span><span class="pk">(</span><span class="q">&#x27;</span><span class="st">app.float.page_text_font_size</span><span class="q">&#x27;</span><span class="pk">))</span></div>
<div class="ln" style="top:414px;color:#606366">11</div>
<div class="code" style="top:414px">        <span class="dt">.</span><span class="mt">fontWeight</span><span class="pk">(</span><span class="wh">FontWeight</span><span class="dt">.</span><span class="wh">Bold</span><span class="pk">)</span></div>
<div class="ln" style="top:445px;color:#606366">12</div>
<div class="code" style="top:445px">        <span class="dt">.</span><span class="mt">alignRules</span><span class="pk">(</span><span class="br">{</span></div>
<div class="ln" style="top:476px;color:#606366">13</div>
<div class="code" style="top:476px">          <span class="wh">center</span><span class="dt">:</span> <span class="br">{</span> <span class="wh">anchor</span><span class="dt">:</span> <span class="q">&#x27;</span><span class="st">__container__</span><span class="q">&#x27;</span><span class="eq">,</span> <span class="wh">align</span><span class="dt">:</span> <span class="wh">VerticalAlign</span><span class="dt">.</span><span class="wh">Center</span> <span class="br">}</span><span class="eq">,</span></div>
<div class="ln" style="top:507px;color:#606366">14</div>
<div class="code" style="top:507px">          <span class="wh">middle</span><span class="dt">:</span> <span class="br">{</span> <span class="wh">anchor</span><span class="dt">:</span> <span class="q">&#x27;</span><span class="st">__container__</span><span class="q">&#x27;</span><span class="eq">,</span> <span class="wh">align</span><span class="dt">:</span> <span class="wh">HorizontalAlign</span><span class="dt">.</span><span class="wh">Center</span> <span class="br">}</span></div>
<div class="ln" style="top:538px;color:#606366">15</div>
<div class="code" style="top:538px">        <span class="br">}</span><span class="pk">)</span></div>
<div class="ln" style="top:569px;color:#606366">16</div>
<div class="code" style="top:569px">        <span class="dt">.</span><span class="mt">onClick</span><span class="pk">(()</span> <span class="eq">=&gt;</span> <span class="br">{</span></div>
<div class="ln" style="top:600px;color:#606366">17</div>
<div class="code" style="top:600px">          <span class="kw">this</span><span class="dt">.</span><span class="wh">message</span> <span class="eq">=</span> <span class="q">&#x27;</span><span class="st">Welcome</span><span class="q">&#x27;</span><span class="eq">;</span></div>
<div class="ln" style="top:631px;color:#606366">18</div>
<div class="code" style="top:631px">        <span class="br">}</span><span class="pk">)</span></div>
<div class="ln" style="top:662px;color:#606366">19</div>
<div class="code" style="top:662px">    <span class="br">}</span></div>
<div class="ln" style="top:693px;color:#606366">20</div>
<div class="code" style="top:693px">    <span class="dt">.</span><span class="mt">height</span><span class="pk">(</span><span class="q">&#x27;</span><span class="st">100%</span><span class="q">&#x27;</span><span class="pk">)</span></div>
<div class="ln" style="top:724px;color:#606366">21</div>
<div class="code" style="top:724px">    <span class="dt">.</span><span class="mt">width</span><span class="pk">(</span><span class="q">&#x27;</span><span class="st">100%</span><span class="q">&#x27;</span><span class="pk">)</span></div>
<div class="ln" style="top:755px;color:#606366">22</div>
<div class="code" style="top:755px">  <span class="br">}</span></div>
<div class="ln" style="top:786px;color:#a4a3a3">23</div>
<div class="code" style="top:786px"><span style="color:#ffef28;background:#3b514d;font-weight:bold;display:inline-block;height:31px;vertical-align:top">}</span></div>
<div class="abs" style="left:479px;top:289px;width:1px;height:466px;background:#3d3d3d"></div>
<div class="abs" style="left:501px;top:320px;width:1px;height:342px;background:#3d3d3d"></div>
<div class="abs" style="left:523px;top:352px;width:1px;height:310px;background:#3d3d3d"></div>
<div class="abs" style="left:545px;top:476px;width:1px;height:62px;background:#3d3d3d"></div>
<div class="abs" style="left:545px;top:600px;width:1px;height:31px;background:#3d3d3d"></div>
<svg class="abs" style="left:444px;top:175px" width="15" height="19" viewBox="0 0 15 19"><path d="M1.5 1.5 H13.5 V10 L7.5 17 L1.5 10Z" fill="#2b2b2b" stroke="#606060" stroke-width="1.2"/><path d="M4.5 7 H10.5" stroke="#606060" stroke-width="1.2"/></svg>
<svg class="abs" style="left:444px;top:268px" width="15" height="19" viewBox="0 0 15 19"><path d="M1.5 1.5 H13.5 V10 L7.5 17 L1.5 10Z" fill="#2b2b2b" stroke="#606060" stroke-width="1.2"/><path d="M4.5 7 H10.5" stroke="#606060" stroke-width="1.2"/></svg>
<svg class="abs" style="left:444px;top:299px" width="15" height="19" viewBox="0 0 15 19"><path d="M1.5 1.5 H13.5 V10 L7.5 17 L1.5 10Z" fill="#2b2b2b" stroke="#606060" stroke-width="1.2"/><path d="M4.5 7 H10.5" stroke="#606060" stroke-width="1.2"/></svg>
<svg class="abs" style="left:444px;top:454px" width="15" height="19" viewBox="0 0 15 19"><path d="M1.5 1.5 H13.5 V10 L7.5 17 L1.5 10Z" fill="#2b2b2b" stroke="#606060" stroke-width="1.2"/><path d="M4.5 7 H10.5" stroke="#606060" stroke-width="1.2"/></svg>
<svg class="abs" style="left:444px;top:543px" width="15" height="19" viewBox="0 0 15 19"><path d="M1.5 17.5 H13.5 V9 L7.5 2 L1.5 9Z" fill="#2b2b2b" stroke="#606060" stroke-width="1.2"/><path d="M4.5 12 H10.5" stroke="#606060" stroke-width="1.2"/></svg>
<svg class="abs" style="left:444px;top:578px" width="15" height="19" viewBox="0 0 15 19"><path d="M1.5 1.5 H13.5 V10 L7.5 17 L1.5 10Z" fill="#2b2b2b" stroke="#606060" stroke-width="1.2"/><path d="M4.5 7 H10.5" stroke="#606060" stroke-width="1.2"/></svg>
<svg class="abs" style="left:444px;top:636px" width="15" height="19" viewBox="0 0 15 19"><path d="M1.5 17.5 H13.5 V9 L7.5 2 L1.5 9Z" fill="#2b2b2b" stroke="#606060" stroke-width="1.2"/><path d="M4.5 12 H10.5" stroke="#606060" stroke-width="1.2"/></svg>
<svg class="abs" style="left:444px;top:667px" width="15" height="19" viewBox="0 0 15 19"><path d="M1.5 17.5 H13.5 V9 L7.5 2 L1.5 9Z" fill="#2b2b2b" stroke="#606060" stroke-width="1.2"/><path d="M4.5 12 H10.5" stroke="#606060" stroke-width="1.2"/></svg>
<svg class="abs" style="left:444px;top:760px" width="15" height="19" viewBox="0 0 15 19"><path d="M1.5 17.5 H13.5 V9 L7.5 2 L1.5 9Z" fill="#2b2b2b" stroke="#606060" stroke-width="1.2"/><path d="M4.5 12 H10.5" stroke="#606060" stroke-width="1.2"/></svg>
<svg class="abs" style="left:444px;top:791px" width="15" height="19" viewBox="0 0 15 19"><path d="M1.5 17.5 H13.5 V9 L7.5 2 L1.5 9Z" fill="#2b2b2b" stroke="#606060" stroke-width="1.2"/><path d="M4.5 12 H10.5" stroke="#606060" stroke-width="1.2"/></svg>
<svg class="abs" style="left:0;top:0;pointer-events:none" width="1587" height="994" viewBox="0 0 1587 994">
<path d="M834.5 223.600 L836.5 222.4 L838.5 223.6 L840.5 222.4 L842.5 223.6 L844.5 222.4 L846.5 223.6 L848.5 222.4 L850.5 223.6 L852.5 222.4 L854.5 223.6 L856.5 222.4 L858.5 223.6 L860.5 222.4 L862.5 223.6 L864.5 222.4 L866.5 223.6 L868.5 222.4 L870.5 223.6 L872.5 222.4 L874.5 223.6 L876.5 222.4 L878.5 223.6 L880.5 222.4 L882.5 223.6 L884.5 222.4 L886.5 223.6 L888.5 222.4 L890.5 223.6 L892.5 222.4 L894.5 223.6 L896.5 222.4 L898.5 223.6 L900.5 222.4 L902.5 223.6 L904.5 222.4 L906.5 223.6 L908.5 222.4 L910.5 223.6 L912.5 222.4 L914.5 223.6 L916.5 222.4 L918.5 223.6 L920.5 222.4 L922.5 223.6" fill="none" stroke="#6a8a5c" stroke-width="1"/>
<g fill="none" stroke="#e5301f" stroke-width="3.700">
<rect x="452" y="92.2" width="96.0" height="37.5" rx="4"/>
<rect x="428" y="142" width="164.0" height="21.7" rx="4"/>
<rect x="466.5" y="194.8" width="88.0" height="31.2" rx="4"/>
<rect x="128.7" y="298.7" width="68.0" height="32.3" rx="4"/>
<rect x="169.4" y="376.7" width="101.3" height="46.9" rx="4"/>
</g>
<polygon fill="#f5281b" points="549.0,114.8 731.1,116.0 728.2,120.1 739.6,113.2 728.1,106.5 731.1,110.5 549.0,114.4"/>
<polygon fill="#f5281b" points="594.4,147.7 822.7,160.1 819.5,163.8 831.3,157.5 820.1,150.2 822.9,154.1 594.4,147.3"/>
<polygon fill="#f5281b" points="560.0,218.7 739.7,252.3 736.1,255.6 748.6,250.8 738.4,242.2 740.7,246.4 560.0,218.3"/>
<polygon fill="#f5281b" points="888.0,252.6 1008.7,260.8 1005.5,264.9 1017.3,258.7 1006.1,251.3 1008.9,255.8 888.0,252.2"/>
<polygon fill="#f5281b" points="558.9,270.7 864.1,348.9 860.4,351.5 873.2,347.6 863.7,338.3 865.8,342.3 559.1,270.3"/>
<polygon fill="#f5281b" points="460.7,377.7 500.4,328.2 501.8,333.0 503.2,319.7 490.9,324.9 495.9,324.9 460.3,377.5"/>
<polygon fill="#f5281b" points="468.7,377.8 519.1,352.7 518.4,357.7 525.2,346.2 511.8,345.8 516.4,347.9 468.5,377.4"/>
<polygon fill="#f5281b" points="89.0,386.4 159.3,393.3 156.0,397.4 167.9,391.4 156.9,383.9 159.6,388.3 89.0,386.0"/>
<polygon fill="#f5281b" points="119.3,467.9 147.9,453.7 147.5,458.9 154.0,447.2 140.6,447.2 145.4,449.4 119.1,467.5"/>
</svg>
<div class="t red" style="left:762px;top:100px;font-size:21px">程序入口</div>
<div class="t red" style="left:879px;top:141px;font-size:21px">自定义组件</div>
<div class="t red" style="left:763.5px;top:252px;font-size:21px">状态<span style="padding:0 1.200px">/</span>数据</div>
<div class="t red" style="left:1028px;top:255px;font-size:21px">这些数据可以做到数据驱动视图</div>
<div class="t red" style="left:897px;top:337px;font-size:21px">构建<span style="margin-left:7px">，</span></div>
<div class="t red" style="left:974px;top:337px;font-size:21px">UI 描述</div>
<div class="t red" style="left:441px;top:397px;font-size:21px">系统组件</div>
<div class="t red" style="left:10px;top:371px;font-size:21px">代码文件</div>
<div class="t red" style="left:27px;top:470px;font-size:21px">资源文件</div>
</body></html>
